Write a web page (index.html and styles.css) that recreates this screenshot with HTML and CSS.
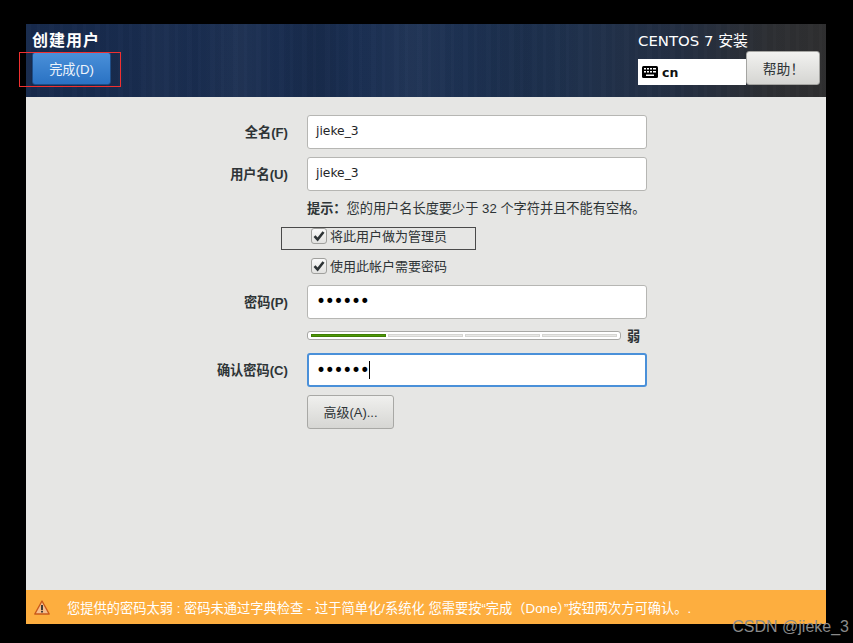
FILE: index.html
```html
<!DOCTYPE html>
<html lang="zh-CN">
<head>
<meta charset="utf-8">
<title>创建用户</title>
<link rel="stylesheet" href="styles.css">
</head>
<body>
<div class="window">
  <header class="topbar">
    <div class="top-left">
      <h1 class="title">创建用户</h1>
      <button class="done-btn">完成(D)</button>
    </div>
    <div class="top-right">
      <div class="product">CENTOS 7 安装</div>
      <div class="top-controls">
        <div class="kbd-box">
          <svg class="kbd-icon" viewBox="0 0 16 12" width="16" height="12">
            <rect x="0" y="0" width="16" height="12" rx="1.5" fill="#000"/>
            <g fill="#fff">
              <rect x="2" y="2" width="2" height="1.5"/><rect x="5" y="2" width="2" height="1.5"/><rect x="8" y="2" width="2" height="1.5"/><rect x="11" y="2" width="3" height="1.5"/>
              <rect x="2" y="5" width="2" height="1.5"/><rect x="5" y="5" width="2" height="1.5"/><rect x="8" y="5" width="2" height="1.5"/><rect x="11" y="5" width="3" height="1.5"/>
              <rect x="4" y="8.5" width="8" height="1.5"/>
            </g>
          </svg>
          <span>cn</span>
        </div>
        <button class="help-btn">帮助！</button>
      </div>
    </div>
  </header>

  <main class="content">
    <div class="form">
      <label class="lbl">全名(F)</label>
      <div class="field">jieke_3</div>

      <label class="lbl">用户名(U)</label>
      <div class="field">jieke_3</div>

      <div class="hint"><b>提示：</b>您的用户名长度要少于 32 个字符并且不能有空格。</div>

      <div class="check first"><span class="box"><svg viewBox="0 0 14 14" width="14" height="14"><path d="M2.5 7.2 L5.6 10.5 L11.5 3" fill="none" stroke="#2e3436" stroke-width="2.6"/></svg></span>将此用户做为管理员</div>
      <div class="check second"><span class="box"><svg viewBox="0 0 14 14" width="14" height="14"><path d="M2.5 7.2 L5.6 10.5 L11.5 3" fill="none" stroke="#2e3436" stroke-width="2.6"/></svg></span>使用此帐户需要密码</div>

      <label class="lbl">密码(P)</label>
      <div class="field dots">••••••</div>

      <div class="strength">
        <div class="meter">
          <span class="seg on"></span><span class="seg"></span><span class="seg"></span><span class="seg"></span>
        </div>
        <span class="strength-word">弱</span>
      </div>

      <label class="lbl">确认密码(C)</label>
      <div class="field dots focused">••••••<span class="caret"></span></div>

      <div class="adv"><button class="adv-btn">高级(A)...</button></div>
    </div>
  </main>

  <footer class="warnbar">
    <svg class="warn-icon" viewBox="0 0 16 15" width="16" height="15">
      <path d="M8 1 L15.2 14 L0.8 14 Z" fill="#f6bd8c" stroke="#c9591a" stroke-width="1.4" stroke-linejoin="round"/>
      <rect x="7.1" y="5" width="1.8" height="5" fill="#2e2e2e"/>
      <rect x="7.1" y="10.8" width="1.8" height="1.7" fill="#2e2e2e"/>
    </svg>
    <span class="warn-text">您提供的密码太弱 : 密码未通过字典检查 - 过于简单化/系统化 您需要按“完成（Done）”按钮两次方可确认。.</span>
  </footer>
</div>
<div class="mark mark-done"></div>
<div class="mark mark-admin"></div>
<div class="watermark">CSDN @jieke_3</div>
</body>
</html>
```
FILE: styles.css
```css
* { box-sizing: border-box; }
html, body { margin: 0; padding: 0; }
body {
  width: 853px;
  height: 643px;
  background: #000;
  position: relative;
  overflow: hidden;
  font-family: "Liberation Sans", "Noto Sans CJK SC", sans-serif;
  font-size: 13.2px;
  color: #2e3436;
  padding: 24px 0 0 26px;
}
.window {
  width: 800px;
  height: 600px;
  background: #e6e6e4;
  display: flex;
  flex-direction: column;
}
.topbar {
  height: 73px;
  flex: none;
  display: flex;
  justify-content: space-between;
  padding: 6px 6px 0 6px;
  background:
    linear-gradient(90deg, transparent 0 110px, rgba(255,255,255,0.02) 130px, transparent 170px, rgba(255,255,255,0.03) 215px, transparent 250px, rgba(0,0,0,0.08) 290px, transparent 330px, rgba(255,255,255,0.03) 385px, transparent 440px, rgba(0,0,0,0.06) 500px, transparent 560px),
    repeating-linear-gradient(90deg, rgba(255,255,255,0.012) 0 5px, rgba(0,0,0,0.018) 5px 11px, rgba(255,255,255,0.01) 11px 14px, rgba(0,0,0,0.012) 14px 23px),
    linear-gradient(90deg, #172a4c 0%, #1a2f52 45%, #1e3250 65%, #242f42 82%, #2d2f33 93%, #2f2f30 100%);
}
.top-left { display: flex; flex-direction: column; }
.title {
  margin: 1px 0 0;
  font-size: 16px;
  letter-spacing: 1px;
  line-height: 20px;
  font-weight: bold;
  color: #fff;
}
.done-btn {
  margin-top: 1px;
  width: 79px;
  height: 33px;
  border: 1px solid #1e4d86;
  border-radius: 3px;
  background: linear-gradient(#4a90d9, #2a72c3);
  color: #eef4fb;
  font: inherit;
  padding: 0;
}
.top-right { display: flex; flex-direction: column; width: 182px; }
.product {
  font-family: "DejaVu Sans", "Noto Sans CJK SC", sans-serif;
  color: #fff;
  font-size: 14.9px;
  line-height: 20px;
  margin-top: 1px;
}
.top-controls {
  display: flex;
  align-items: flex-start;
}
.kbd-box {
  margin-top: 8px;
  width: 108px;
  height: 26px;
  background: #fff;
  display: flex;
  align-items: center;
  gap: 4px;
  padding-left: 4px;
  color: #111;
  font-family: "DejaVu Sans", sans-serif;
  font-weight: bold;
  font-size: 12.5px;
}
.kbd-icon { flex: none; }
.help-btn {
  width: 74px;
  height: 34px;
  border: 1px solid #a5a5a2;
  border-radius: 3px;
  background: linear-gradient(#f2f2f0, #d5d5d2);
  color: #2e3436;
  font: inherit;
  font-size: 13.8px;
  padding: 0 0 0 1px;
}
.content { flex: 1; padding-top: 18px; }
.form {
  display: grid;
  grid-template-columns: 262px 340px;
  column-gap: 19px;
  align-items: center;
}
.lbl {
  text-align: right;
  font-weight: bold;
  color: #2e3436;
  margin-bottom: 10px;
}
.field {
  height: 34px;
  background: #fff;
  border: 1px solid #b6b6b3;
  border-radius: 3px;
  display: flex;
  align-items: center;
  padding: 0 0 3px 8px;
  font-family: "DejaVu Sans", sans-serif;
  font-size: 12.3px;
  color: #1f2527;
  margin-bottom: 8px;
}
.dots { font-size: 17px; letter-spacing: -1.3px; color: #000; padding: 0 0 2px 8px; }
.focused { border: 2px solid #4a90d9; padding: 0 0 1px 7px; }
.caret { display: inline-block; width: 1px; height: 18px; background: #000; margin: 1px 0 0 1px; }
.hint {
  grid-column: 2;
  line-height: 20px;
  color: #2e3436;
  white-space: nowrap;
}
.check {
  grid-column: 2;
  margin-left: 4px;
  display: flex;
  align-items: center;
  gap: 3px;
  height: 17px;
  font-size: 13px;
}
.check.first { margin-top: 8px; }
.check.second { margin-top: 13px; margin-bottom: 11px; }
.box {
  width: 16px;
  height: 16px;
  border: 1px solid #a0a09d;
  border-radius: 3px;
  background: linear-gradient(#fafafa, #e2e2e0);
  display: flex;
  align-items: center;
  justify-content: center;
  flex: none;
}
.strength {
  grid-column: 2;
  display: flex;
  align-items: center;
  gap: 6px;
  height: 12px;
  margin: 2px 0 12px;
  width: 340px;
}
.meter {
  width: 314px;
  height: 9px;
  border: 1px solid #a8a8a5;
  border-radius: 3px;
  background: #fff;
  display: flex;
  gap: 2px;
  padding: 2px 3px;
}
.seg { flex: 1; background: #e8e8e6; border: 1px solid #d5d5d2; height: 3px; }
.seg.on { background: #4e9a06; border-color: #3f7d05; }
.strength-word { font-weight: bold; }
.adv { grid-column: 2; }
.adv-btn {
  width: 87px;
  height: 34px;
  border: 1px solid #a8a8a5;
  border-radius: 3px;
  background: linear-gradient(#f0f0ee, #d6d6d3);
  color: #2e3436;
  font: inherit;
  font-size: 13px;
  padding: 0 0 2px;
}
.warnbar {
  height: 34px;
  flex: none;
  background: #fdae3f;
  display: flex;
  align-items: center;
  padding-left: 8px;
  color: #fff;
  font-size: 13.25px;
}
.warn-icon { flex: none; margin-right: 17px; }
.warn-text { white-space: nowrap; }
.mark { position: absolute; }
.mark-done {
  left: 19px;
  top: 52px;
  width: 102px;
  height: 35px;
  border: 1px solid #f03030;
}
.mark-admin {
  left: 281px;
  top: 227px;
  width: 195px;
  height: 23px;
  border: 1px solid #4a4a4a;
}
.watermark {
  position: absolute;
  right: 4px;
  top: 617px;
  font-size: 16px;
  line-height: 20px;
  color: #8a8a8a;
}
```
